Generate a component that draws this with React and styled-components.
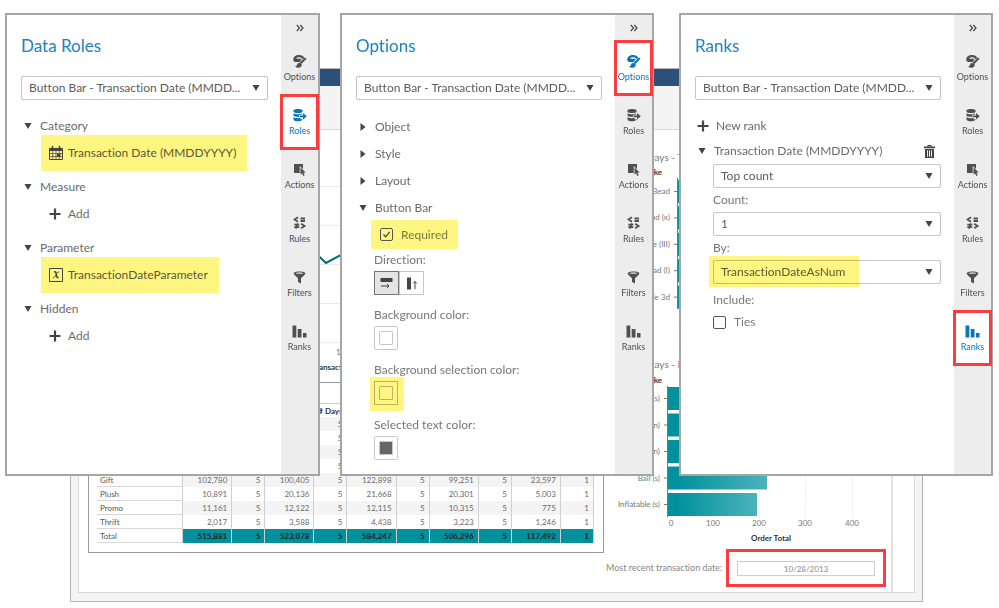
import React from 'react'

import styled, { createGlobalStyle } from 'styled-components';

const GlobalStyle = createGlobalStyle`
  * {
    box-sizing: border-box;
  }
  body {
    margin: 0;
    background: #fff;
    color: #6a6a6a;
    font-family: Lato, "Liberation Sans", sans-serif;
    font-size: 12px;
    font-variant-ligatures: none;
    line-height: 16px;
  }
  button, input, select {
    font: inherit;
    font-variant-ligatures: none;
    color: inherit;
    margin: 0;
  }
`;

/* ---------- page ---------- */

const Stage = styled.main`
  display: grid;
`;

const Panels = styled.div`
  grid-area: 1 / 1;
  align-self: start;
  z-index: 1;
  display: grid;
  grid-template-columns: 315fr 20fr 314fr 25fr 314fr;
  padding: 13px 6px 0 5px;
`;

const Panel = styled.section`
  grid-column: ${({ $column }) => $column};
  display: flex;
  min-width: 0;
  background: #fff;
  border: 2px solid #a6a6a6;
`;

const PanelBody = styled.div`
  flex: 1;
  min-width: 0;
  padding: 19px 13px 14px 14px;
`;

const PanelTitle = styled.h2`
  margin: 0 0 18px;
  color: #1b82c5;
  font-size: 17px;
  font-weight: 400;
  line-height: 24px;
`;

/* ---------- icon rail ---------- */

const Rail = styled.nav`
  flex: none;
  width: 37px;
  background: #ededed;
`;

const CollapseButton = styled.button`
  display: flex;
  align-items: center;
  justify-content: center;
  width: 100%;
  height: 26px;
  padding: 0;
  border: 0;
  background: none;
  color: #444;
`;

const RailTab = styled.button`
  display: flex;
  flex-direction: column;
  align-items: center;
  gap: 2px;
  width: 100%;
  height: 54px;
  padding: 13px 0 0;
  border: 0;
  background: ${({ $active }) => ($active ? '#fff' : 'none')};
  outline: ${({ $active }) => ($active ? '3px solid #fb3d3f' : 'none')};
  outline-offset: -2px;
  color: ${({ $active }) => ($active ? '#0a74bd' : '#505050')};
  font-size: 9px;
  line-height: 12px;
`;

/* ---------- form parts ---------- */

const SelectBox = styled.div`
  position: relative;
  display: grid;
  align-items: center;
  margin-bottom: ${({ $gap = 0 }) => $gap}px;

  select {
    grid-area: 1 / 1;
    width: 100%;
    height: 24px;
    padding: 0 24px 0 7px;
    appearance: none;
    border: 1px solid #c4c4c4;
    border-radius: 2px;
    background: #fff;
    color: #5c5c5c;
  }
  svg {
    grid-area: 1 / 1;
    justify-self: end;
    margin-right: 8px;
    color: #444;
    pointer-events: none;
  }
`;

const Marker = styled.span`
  position: absolute;
  top: -4px;
  left: -4px;
  width: 150px;
  height: 31px;
  background: #fff681;
  mix-blend-mode: multiply;
  pointer-events: none;
`;

const Disclosure = styled.button`
  display: flex;
  align-items: center;
  gap: 8px;
  padding: 0 0 0 3px;
  border: 0;
  background: none;
  text-align: left;

  svg {
    color: #444;
  }
`;

const RoleGroup = styled.div`
  margin-bottom: 8px;
`;

const RoleItem = styled.button`
  display: flex;
  align-items: center;
  gap: 5px;
  height: 36px;
  margin: 1px 0 0 20px;
  padding: 0 11px 0 8px;
  border: 0;
  background: ${({ $marked }) => ($marked ? '#fff681' : 'none')};
  color: ${({ $marked }) => ($marked ? '#5b5735' : '#6a6a6a')};

  svg {
    color: #444;
  }
`;

const OptionList = styled.div`
  display: flex;
  flex-direction: column;
  gap: 11px;
  padding-top: 1px;
`;

const OptionFields = styled.div`
  display: flex;
  flex-direction: column;
  align-items: flex-start;
  padding: 4px 0 0 15px;
`;

const CheckLabel = styled.label`
  display: flex;
  align-items: center;
  gap: 8px;
  height: ${({ $marked }) => ($marked ? 29 : 16)}px;
  padding: ${({ $marked }) => ($marked ? '0 10px 0 9px' : '0')};
  background: ${({ $marked }) => ($marked ? '#fff681' : 'none')};
  color: ${({ $marked }) => ($marked ? '#7d7843' : '#777')};
`;

const CheckBox = styled.span`
  display: grid;

  input {
    grid-area: 1 / 1;
    width: 13px;
    height: 13px;
    appearance: none;
    border: 1px solid #555;
    border-radius: 2px;
  }
  svg {
    grid-area: 1 / 1;
    visibility: hidden;
    pointer-events: none;
    color: #444;
  }
  input:checked + svg {
    visibility: visible;
  }
`;

const Field = styled.div`
  display: flex;
  flex-direction: column;
  align-items: flex-start;
  gap: 3px;
  margin: ${({ $first }) => ($first ? 3 : 12)}px 0 0 3px;
  color: #777;
`;

const Toggle = styled.div`
  display: flex;
`;

const ToggleButton = styled.button`
  display: flex;
  align-items: center;
  justify-content: center;
  width: 25px;
  height: 24px;
  padding: 0;
  border: 1px solid ${({ $on }) => ($on ? '#777' : '#c8c8c8')};
  background: ${({ $on }) => ($on ? '#e4e4e4' : '#fff')};
  color: #444;
`;

const Swatch = styled.button`
  width: 24px;
  height: 24px;
  padding: 4px;
  border: 1px solid ${({ $marked }) => ($marked ? '#b9b35f' : '#c8c8c8')};
  border-radius: ${({ $marked }) => ($marked ? 0 : 2)}px;
  background: ${({ $marked }) => ($marked ? '#fff681' : '#fff')};
  box-shadow: ${({ $marked }) => ($marked ? '1px 1px 0 5px #fff681' : 'none')};

  span {
    display: block;
    height: 14px;
    border: 1px solid ${({ $marked }) => ($marked ? '#b9b35f' : '#c8c8c8')};
    border-radius: 1px;
    background: ${({ $fill }) => $fill};
  }
`;

const NewRank = styled.button`
  display: flex;
  align-items: center;
  gap: 5px;
  padding: 0 0 0 2px;
  border: 0;
  background: none;

  svg {
    color: #444;
  }
`;

const RankHeader = styled.div`
  display: flex;
  align-items: center;
  justify-content: space-between;
  margin: 9px 0 5px;
`;

const TrashButton = styled.button`
  display: flex;
  padding: 0;
  margin-right: 6px;
  border: 0;
  background: none;
  color: #444;
`;

const RankFields = styled.div`
  padding-left: 18px;
  color: #777;
`;

const FieldLabel = styled.label`
  display: block;
  margin-bottom: 4px;
`;

const FieldText = styled.div`
  margin-bottom: 6px;
`;

/* ---------- report behind the panels ---------- */

const Report = styled.div`
  grid-area: 1 / 1;
  display: flex;
  flex-direction: column;
  margin: 68px 76px 6px 70px;
  border: 1px solid #b4b4b4;
  background: #f4f4f4;
`;

const Banner = styled.div`
  height: 17px;
  background: #2d5078;
`;

const PromptBar = styled.div`
  height: 43px;
`;

const Sheet = styled.div`
  display: grid;
  grid-template-columns: 527fr 287fr 21fr;
  margin: 0 7px 8px;
  border: 1px solid #d8d8d8;
  background: #fff;
`;

const MainColumn = styled.div`
  padding: 0 2px 0 9px;
`;

const SideColumn = styled.div`
  border-right: 2px solid #e2e2e2;
`;

const Chart = styled.svg`
  display: block;
  width: 100%;
  overflow: hidden;
  font-size: 8px;
  fill: #777;

  .bold {
    font-weight: 700;
    fill: #333;
  }
  .title {
    font-size: 10px;
  }
`;

const TableBox = styled.div`
  padding: 20px 9px 9px 8px;
  border: 1px solid #999;
`;

const DataTable = styled.table`
  width: 100%;
  table-layout: fixed;
  border-collapse: separate;
  border-spacing: 0;
  border-top: 1px solid #ccc;
  font-size: 8px;
  line-height: 10px;

  th, td {
    height: 14px;
    padding: 0 4px 0 0;
    border-right: 1px solid #d0d0d0;
    text-align: right;
    white-space: nowrap;
    font-weight: 400;
  }
  thead th {
    height: 13px;
    color: #333;
    font-weight: 700;
  }
  th:first-child {
    padding-left: 3px;
    border-bottom: 1px solid #d8d8d8;
    text-align: left;
    color: #555;
  }
  tbody tr:nth-child(odd) td {
    background: #f4f4f4;
  }
  tbody tr:last-child td {
    background: #00919c;
    color: #222;
    font-weight: 700;
  }
`;

const PromptRow = styled.div`
  display: flex;
  align-items: center;
  margin: 0 5px 5px 0;
  color: #888;
  font-size: 9px;

  label {
    flex: none;
    width: 120px;
  }
`;

const DateFrame = styled.div`
  flex: 1;
  padding: 9px 8px 8px;
  border: 3px solid #fb3d3f;

  input {
    display: block;
    width: 100%;
    height: 15px;
    padding: 0;
    border: 1px solid #ccc;
    text-align: center;
    font-size: 8px;
  }
`;

/* ---------- icons ---------- */

const Down = () => (
  <svg width="8" height="8" viewBox="0 0 8 8" fill="currentColor"><path d="M0.5 1h7L4 7z" /></svg>
);

const Right = () => (
  <svg width="8" height="8" viewBox="0 0 8 8" fill="currentColor"><path d="M1.5 0v8L6.5 4z" /></svg>
);

const Plus = () => (
  <svg width="14" height="12" viewBox="0 0 14 12" stroke="currentColor" strokeWidth="2.200"><path d="M6 0.5v11M0.5 6h11" /></svg>
);

const Collapse = () => (
  <svg width="8" height="8" viewBox="0 0 8 8" fill="none" stroke="currentColor" strokeWidth="1.2"><path d="M0.8 1l2.7 3-2.7 3M4.3 1L7 4 4.3 7" /></svg>
);

const Calendar = () => (
  <svg width="14" height="14" viewBox="0 0 14 14" fill="none" stroke="currentColor">
    <path d="M3.500 0v3M10.500 0v3" strokeWidth="1.6" />
    <path d="M0.500 2.500h13v11h-13z" />
    <path d="M0.500 4h13" strokeWidth="2" />
    <path d="M0.500 7.500h13M0.500 10.500h13M3.700 5v8.500M7 5v8.500M10.300 5v8.500" strokeWidth="0.7" />
    <path d="M8 7.700h3.500v3.200H8z" fill="currentColor" stroke="none" />
  </svg>
);

const ParameterIcon = () => (
  <svg width="14" height="14" viewBox="0 0 14 14" fill="none" stroke="currentColor">
    <path d="M0.5 0.5h13v13h-13z" />
    <path d="M5 3.900c1.200-.4 1.800 0 2 1l.8 3.700c.2 1 .8 1.300 1.700.7" strokeWidth="1.500" />
    <path d="M10.300 4.100c-1.300-.4-2 .4-3.100 2.500s-1.900 3.400-3.400 2.900" strokeWidth="0.900" />
  </svg>
);

const Trash = () => (
  <svg width="11" height="13" viewBox="0 0 11 13" fill="currentColor">
    <path d="M3.500 0h4v1.500H11V3.300H0V1.500h3.500zM4.500 0.900v.7h2v-.7z" fillRule="evenodd" />
    <path d="M1 4h9v9H1zM3 5.200v6.500h.9V5.200zM5.050 5.200v6.500h.9V5.200zM7.100 5.200v6.500H8V5.200z" fillRule="evenodd" />
  </svg>
);

const Tick = () => (
  <svg width="13" height="13" viewBox="0 0 13 13" fill="none" stroke="currentColor" strokeWidth="1.300"><path d="M3.500 6.500l2.200 2.300 4-5" /></svg>
);

const Horizontal = () => (
  <svg width="13" height="12" viewBox="0 0 13 12" fill="currentColor">
    <path d="M0.500 1h12v4h-12z" />
    <path d="M1 9h8M6.800 7l2.200 2-2.200 2" fill="none" stroke="currentColor" />
  </svg>
);

const Vertical = () => (
  <svg width="12" height="13" viewBox="0 0 12 13" fill="currentColor">
    <path d="M1 0.500h4v12H1z" />
    <path d="M9 12V4.500M7.200 6.500L9 4.500l1.800 2" fill="none" stroke="currentColor" />
  </svg>
);

const OptionsIcon = () => (
  <>
    <path d="M1.200 5.800C1.200 2.800 3.700 1 7 1c2.600 0 4.700 1.100 5.300 2.900L10.500 5.300C9.900 3.900 8.500 3.300 7 3.300c-1.300 0-2.300.5-2.700 1.400h5.500L7.700 7.900H3.400C2 7.900 1.200 7 1.200 5.800z" />
    <path d="M13.100 3.500l1.500 1.300-5.300 5.300-1.900-1.300z" />
    <path d="M6.600 8.900c1.600-.1 3.400.7 3.200 2.200-.2 1.800-1.800 2.800-3.500 2.700-1.400-.1-2.600-.7-3.200-1.800 1.700.1 1.700-.6 2-1.500.2-.8.700-1.500 1.500-1.600z" />
  </>
);

const RolesIcon = () => (
  <>
    <path d="M1.500 2.600C1.500.6 10.500.6 10.500 2.600v1.200c0 1.600-9 1.600-9 0z" />
    <path d="M1.500 5.200c1.500 1.300 6 1.500 8.500.3v1.300H7v2c-2.500.2-5-.2-5.500-1.400z" />
    <path d="M1.500 9c1 1.200 4 1.300 7 1v1.300c1 .1 1.600-.2 2.200-.6-.2 3.600-9.200 3.300-9.200.6z" />
    <path d="M7.500 7.400h3.500V5l3.800 3.300-3.800 3.300V9.200H7.500z" />
  </>
);

const ActionsIcon = () => (
  <>
    <path d="M2 2h9v5L7.700 4v7H2z" />
    <path d="M8.500 5.500l5.200 5-2.300.2 1.300 2.500-1.400.7-1.300-2.600-1.500 1.500z" />
  </>
);

const RulesIcon = () => (
  <path
    d="M6 1.200L2.600 3.500 6 5.800M8.500 2.500h4.500M8.500 5h4.500M2.300 8.700h5M2.300 11.200h5M6 7.300L3.700 12.700M9.200 7.700l3.400 2.300-3.400 2.300"
    fill="none"
    stroke="currentColor"
    strokeWidth="1.800"
  />
);

const FiltersIcon = () => (
  <path d="M1.700 3.200C1.700.8 13.300.8 13.300 3.200c0 1.500-2.800 3.300-4.300 5V13.500L6 12V8.200c-1.500-1.700-4.300-3.500-4.300-5zM3.200 3.100c.6 1 8 1 8.600 0-.9-.9-7.700-.9-8.600 0z" fillRule="evenodd" />
);

const RanksIcon = () => (
  <path d="M0.500 1.500h3.800v12H0.500zM5.700 5h3.800v8.500H5.700zM11 9h3.500v4.500H11z" />
);

const TABS = [
  { name: 'Options', Icon: OptionsIcon },
  { name: 'Roles', Icon: RolesIcon },
  { name: 'Actions', Icon: ActionsIcon },
  { name: 'Rules', Icon: RulesIcon },
  { name: 'Filters', Icon: FiltersIcon },
  { name: 'Ranks', Icon: RanksIcon },
];

/* ---------- shared pieces ---------- */

function SidePanel({ title, column, active, children }) {
  return (
    <Panel $column={column}>
      <PanelBody>
        <PanelTitle>{title}</PanelTitle>
        <Select value="Button Bar - Transaction Date (MMDD..." label="Object" gap={18} />
        {children}
      </PanelBody>
      <Rail>
        <CollapseButton aria-label="Collapse"><Collapse /></CollapseButton>
        {TABS.map(({ name, Icon }) => (
          <RailTab key={name} $active={name === active}>
            <svg width="15" height="15" viewBox="0 0 15 15" fill="currentColor"><Icon /></svg>
            {name}
          </RailTab>
        ))}
      </Rail>
    </Panel>
  )
}

function Select({ id, value, label, gap, marked }) {
  return (
    <SelectBox $gap={gap}>
      <select id={id} aria-label={label}>
        <option>{value}</option>
      </select>
      <Down />
      {marked && <Marker />}
    </SelectBox>
  )
}

function Role({ name, icon, item, marked }) {
  return (
    <RoleGroup>
      <Disclosure><Down />{name}</Disclosure>
      <RoleItem $marked={marked}>{icon}{item}</RoleItem>
    </RoleGroup>
  )
}

function Check({ label, checked, marked }) {
  return (
    <CheckLabel $marked={marked}>
      <CheckBox>
        <input type="checkbox" defaultChecked={checked} />
        <Tick />
      </CheckBox>
      {label}
    </CheckLabel>
  )
}

function ColorField({ label, fill, marked }) {
  return (
    <Field>
      {label}
      <Swatch $fill={fill} $marked={marked} aria-label={label}><span /></Swatch>
    </Field>
  )
}

/* ---------- report content ---------- */

const HIDDEN = ['', '', '', '5', '', '', '', '', '', ''];

const ROWS = [
  ['', ...HIDDEN],
  ['', ...HIDDEN],
  ['', ...HIDDEN],
  ['', ...HIDDEN],
  ['Gift', '102,780', '5', '100,405', '5', '122,898', '5', '99,251', '5', '23,597', '1'],
  ['Plush', '10,891', '5', '20,136', '5', '21,668', '5', '20,301', '5', '5,003', '1'],
  ['Promo', '11,161', '5', '12,122', '5', '12,115', '5', '10,315', '5', '775', '1'],
  ['Thrift', '2,017', '5', '3,588', '5', '4,438', '5', '3,223', '5', '1,246', '1'],
  ['Total', '515,881', '5', '523,078', '5', '584,247', '5', '506,296', '5', '117,492', '1'],
];

function LineChart() {
  return (
    <Chart viewBox="0 0 516 252">
      {[56, 95, 134, 173, 212].map((y) => (
        <path key={y} d={`M20 ${y}.5h480`} stroke="#e2e2e2" strokeDasharray="2 1" />
      ))}
      <path d="M222 118L238 133L262 120" fill="none" stroke="#00707a" strokeWidth="2" />
      <text x="248" y="225">1</text>
      <text className="bold" x="224" y="240">Transaction Date</text>
    </Chart>
  )
}

const TOP_LABELS = ['Bead', 'Bead (x)', 'Tile (III)', 'Bead (I)', 'Tile 3d'];

function TopBars() {
  return (
    <Chart viewBox="0 0 285 222">
      <text className="title" x="41" y="31">Days - T</text>
      <text className="bold" x="56" y="45" textAnchor="end">Make</text>
      <path d="M71.500 48v131" stroke="#777" />
      {TOP_LABELS.map((label, i) => (
        <g key={label}>
          <text x="64" y={64 + i * 26.4} textAnchor="end">{label}</text>
          <path d={`M68 ${61.5 + i * 26.4}h3`} stroke="#777" />
          <rect x="72" y={50 + i * 26.4} width="120" height="23" fill="#00919c" />
        </g>
      ))}
    </Chart>
  )
}

const BOTTOM_BARS = [
  ['Bear (s)', 180],
  ['Bear (n)', 160],
  ['Ball (n)', 140],
  ['Ball (s)', 100],
  ['Inflatable (s)', 90],
];

function BottomBars() {
  return (
    <Chart viewBox="0 0 285 197">
      <defs>
        <linearGradient id="bar" x1="0" x2="1">
          <stop offset="0.1" stopColor="#00919c" />
          <stop offset="1" stopColor="#4cb2bb" />
        </linearGradient>
      </defs>
      <text className="title" x="41" y="16">Days - B</text>
      <text className="bold" x="56" y="31" textAnchor="end">Make</text>
      {[107, 153, 199, 246].map((x) => (
        <path key={x} d={`M${x}.5 34v131`} stroke="#ececec" strokeDasharray="2 1" />
      ))}
      {BOTTOM_BARS.map(([label, width], i) => (
        <g key={label}>
          <text x="54" y={49 + i * 26.500} textAnchor="end">{label}</text>
          <path d={`M58 ${46.5 + i * 26.500}h3`} stroke="#777" />
          <rect x="61" y={35 + i * 26.500} width={width} height="23" fill="url(#bar)" />
        </g>
      ))}
      <path d="M61.500 34v131" stroke="#777" />
      {[65, 107, 153, 199, 246].map((x, i) => (
        <text key={x} x={x} y="174" textAnchor="middle">{i * 100}</text>
      ))}
      <text className="bold" x="165" y="189" textAnchor="middle">Order Total</text>
    </Chart>
  )
}

export default function App() {

  return (
    <>
      <GlobalStyle />
      <Stage>
        <Report>
          <Banner />
          <PromptBar />
          <Sheet>
            <MainColumn>
              <LineChart />
              <TableBox>
                <DataTable>
                  <colgroup>
                    <col width="86" />
                    {[49, 33, 49, 33, 49, 33, 49, 33, 49, 33].map((w, i) => <col key={i} width={w} />)}
                  </colgroup>
                  <thead>
                    <tr>
                      <th /><th /><th /><th />
                      <th># Days</th>
                      <th /><th /><th /><th /><th /><th />
                    </tr>
                  </thead>
                  <tbody>
                    {ROWS.map(([name, ...cells], i) => (
                      <tr key={i}>
                        <th scope="row">{name}</th>
                        {cells.map((cell, c) => <td key={c}>{cell}</td>)}
                      </tr>
                    ))}
                  </tbody>
                </DataTable>
              </TableBox>
            </MainColumn>
            <SideColumn>
              <TopBars />
              <BottomBars />
              <PromptRow>
                <label htmlFor="recent">Most recent transaction date:</label>
                <DateFrame>
                  <input id="recent" defaultValue="10/28/2013" />
                </DateFrame>
              </PromptRow>
            </SideColumn>
          </Sheet>
        </Report>

        <Panels>
          <SidePanel title="Data Roles" column={1} active="Roles">
            <Role name="Category" icon={<Calendar />} item="Transaction Date (MMDDYYYY)" marked />
            <Role name="Measure" icon={<Plus />} item="Add" />
            <Role name="Parameter" icon={<ParameterIcon />} item="TransactionDateParameter" marked />
            <Role name="Hidden" icon={<Plus />} item="Add" />
          </SidePanel>

          <SidePanel title="Options" column={3} active="Options">
            <OptionList>
              <Disclosure><Right />Object</Disclosure>
              <Disclosure><Right />Style</Disclosure>
              <Disclosure><Right />Layout</Disclosure>
              <Disclosure><Down />Button Bar</Disclosure>
            </OptionList>
            <OptionFields>
              <Check label="Required" checked marked />
              <Field $first>
                Direction:
                <Toggle>
                  <ToggleButton $on aria-label="Horizontal"><Horizontal /></ToggleButton>
                  <ToggleButton aria-label="Vertical"><Vertical /></ToggleButton>
                </Toggle>
              </Field>
              <ColorField label="Background color:" fill="#fff" />
              <ColorField label="Background selection color:" fill="#fff681" marked />
              <ColorField label="Selected text color:" fill="#666" />
            </OptionFields>
          </SidePanel>

          <SidePanel title="Ranks" column={5} active="Ranks">
            <NewRank><Plus />New rank</NewRank>
            <RankHeader>
              <Disclosure><Down />Transaction Date (MMDDYYYY)</Disclosure>
              <TrashButton aria-label="Delete"><Trash /></TrashButton>
            </RankHeader>
            <RankFields>
              <Select value="Top count" label="Rank type" gap={4} />
              <FieldLabel htmlFor="count">Count:</FieldLabel>
              <Select id="count" value="1" gap={4} />
              <FieldLabel htmlFor="by">By:</FieldLabel>
              <Select id="by" value="TransactionDateAsNum" gap={8} marked />
              <FieldText>Include:</FieldText>
              <Check label="Ties" />
            </RankFields>
          </SidePanel>
        </Panels>
      </Stage>
    </>
  )
}
